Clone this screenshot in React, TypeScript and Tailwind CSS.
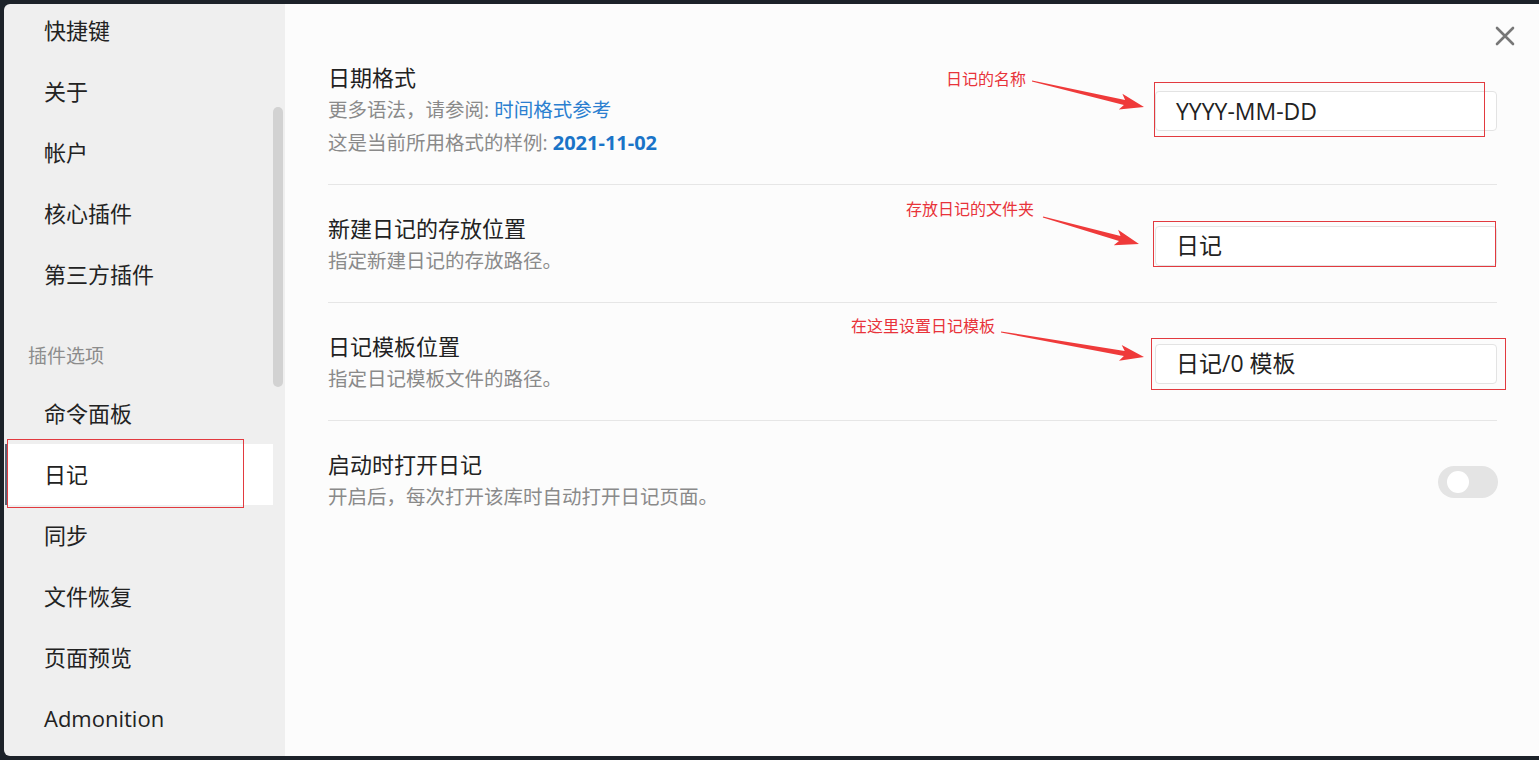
import React from 'react';

const FONT = '"Open Sans", "Noto Sans CJK SC", "Noto Sans", sans-serif';

const navTop = ['快捷键', '关于', '帐户', '核心插件', '第三方插件'];
const navPlugins = ['命令面板', '日记', '同步', '文件恢复', '页面预览', 'Admonition'];

// tapered arrow from (x1,y1) to (x2,y2)
function arrowPoints(x1: number, y1: number, x2: number, y2: number) {
  const dx = x2 - x1;
  const dy = y2 - y1;
  const len = Math.hypot(dx, dy);
  const ux = dx / len;
  const uy = dy / len;
  const nx = -uy;
  const ny = ux;
  const headLen = 24;
  const headW = 8;
  const shaftW = 2.6;
  const bx = x2 - ux * headLen;
  const by = y2 - uy * headLen;
  const pts = [
    [x1 + nx * 0.6, y1 + ny * 0.6],
    [bx + ux * 4 + nx * shaftW, by + uy * 4 + ny * shaftW],
    [bx + nx * headW, by + ny * headW],
    [x2, y2],
    [bx - nx * headW, by - ny * headW],
    [bx + ux * 4 - nx * shaftW, by + uy * 4 - ny * shaftW],
    [x1 - nx * 0.6, y1 - ny * 0.6],
  ];
  return pts.map(p => `${p[0].toFixed(1)},${p[1].toFixed(1)}`).join(' ');
}

function NavItem({ label, active }: { label: string; active?: boolean }) {
  return (
    <div
      className={
        active
          ? 'h-[61px] flex items-center pl-[36px] bg-white border-l-[3px] border-[#5b6475] ml-[1px] text-[22px] text-[#222]'
          : 'h-[61px] flex items-center pl-[40px] text-[22px] text-[#222]'
      }
    >
      {label}
    </div>
  );
}

function TextInput({ value }: { value: string }) {
  return (
    <div className="w-[342px] h-[40px] shrink-0 flex items-center px-[20px] bg-white border border-[#e3e3e3] rounded-[4px] text-[23px] text-[#222]">
      {value}
    </div>
  );
}

function Row({
  title,
  children,
  control,
  last,
}: {
  title: string;
  children: React.ReactNode;
  control: React.ReactNode;
  last?: boolean;
}) {
  return (
    <div
      className={
        'flex items-center justify-between pt-[29px] pb-[25px] ' +
        (last ? '' : 'border-b border-[#e6e6e6]')
      }
    >
      <div className="flex flex-col">
        <div className="text-[22px] leading-[28px] text-[#222]">{title}</div>
        <div className="mt-[2px] text-[19.5px] leading-[33px] text-[#8a8a8a]">{children}</div>
      </div>
      {control}
    </div>
  );
}

export default function App() {
  return (
    <div className="relative w-[1539px] h-[760px] overflow-hidden bg-[#1c2229]" style={{ fontFamily: FONT }}>
      <div className="absolute left-[4px] top-[4px] right-0 h-[752px] flex rounded-tl-[6px] rounded-bl-[6px] overflow-hidden">
        {/* sidebar */}
        <div className="w-[281px] h-full bg-[#efefef] flex">
          <div className="flex-1 flex flex-col -mt-[4px]">
            {navTop.map(l => (
              <NavItem key={l} label={l} />
            ))}
            <div className="h-[78px] flex items-end pl-[24px] pb-[15px] text-[19px] leading-[24px] text-[#8c8c8c]">
              插件选项
            </div>
            {navPlugins.map(l => (
              <NavItem key={l} label={l} active={l === '日记'} />
            ))}
          </div>
          <div className="w-[12px] h-full pt-[103px] pr-[1px]">
            <div className="w-[10px] h-[280px] rounded-full bg-[#d2d2d2]" />
          </div>
        </div>

        {/* main */}
        <div className="flex-1 h-full bg-[#fcfcfc] relative">
          <button className="absolute left-[1209px] top-[21px] w-[22px] h-[22px] flex items-center justify-center">
            <svg width="20" height="20" viewBox="0 0 20 20">
              <path d="M2 2 L18 18 M18 2 L2 18" stroke="#777" strokeWidth="2.6" strokeLinecap="round" />
            </svg>
          </button>

          <div className="ml-[43px] w-[1169px] pt-[30px] flex flex-col">
            <Row title="日期格式" control={<TextInput value="YYYY-MM-DD" />}>
              <div>
                更多语法，请参阅: <span className="text-[#2b7fd0]">时间格式参考</span>
              </div>
              <div>
                这是当前所用格式的样例: <span className="text-[#1a74c8] font-bold text-[20px]">2021-11-02</span>
              </div>
            </Row>
            <Row title="新建日记的存放位置" control={<TextInput value="日记" />}>
              指定新建日记的存放路径。
            </Row>
            <Row title="日记模板位置" control={<TextInput value="日记/0 模板" />}>
              指定日记模板文件的路径。
            </Row>
            <Row
              title="启动时打开日记"
              last
              control={
                <div className="w-[60px] h-[32px] shrink-0 rounded-full bg-[#e4e4e4] flex items-center pl-[9px] mr-[-1px]">
                  <div className="w-[22px] h-[22px] rounded-full bg-white" />
                </div>
              }
            >
              开启后，每次打开该库时自动打开日记页面。
            </Row>
          </div>
        </div>
      </div>

      {/* annotation overlay */}
      <svg className="absolute inset-0 pointer-events-none" width="1539" height="760">
        <g fill="none" stroke="#e23a3f" strokeWidth="1">
          <rect x="7.5" y="439.5" width="236" height="68" />
          <rect x="1154.5" y="82.5" width="330" height="54" />
          <rect x="1153.5" y="221.5" width="342" height="45" />
          <rect x="1151.5" y="338.5" width="354" height="51" />
        </g>
        <g fill="#ef3a3a">
          <polygon points={arrowPoints(1032, 81, 1144, 107)} />
          <polygon points={arrowPoints(1043, 217, 1139, 244)} />
          <polygon points={arrowPoints(1001, 332, 1144, 357)} />
        </g>
      </svg>
      <div className="absolute left-[946px] top-[68px] text-[16px] leading-[22px] text-[#e8333a] pointer-events-none">
        日记的名称
      </div>
      <div className="absolute left-[906px] top-[198px] text-[16px] leading-[22px] text-[#e8333a] pointer-events-none">
        存放日记的文件夹
      </div>
      <div className="absolute left-[851px] top-[315px] text-[16px] leading-[22px] text-[#e8333a] pointer-events-none">
        在这里设置日记模板
      </div>
    </div>
  );
}
